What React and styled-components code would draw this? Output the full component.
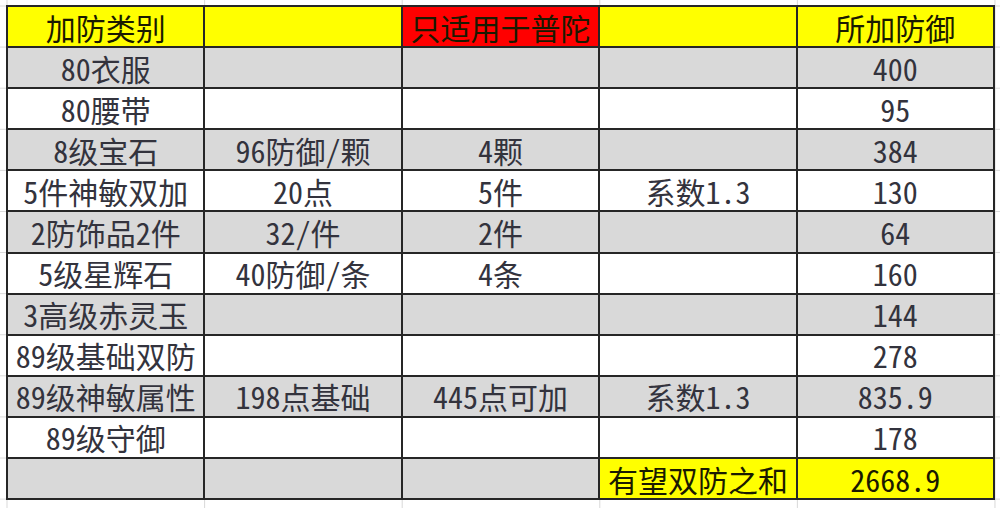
import React from "react";
import styled, { createGlobalStyle } from "styled-components";

const GlobalStyle = createGlobalStyle`
  html, body {
    margin: 0;
    padding: 0;
    background: #fff;
  }
`;

const rows = [
  { tone: "head", cells: ["加防类别", "", "只适用于普陀", "", "所加防御"] },
  { tone: "gray", cells: ["80衣服", "", "", "", "400"] },
  { tone: "white", cells: ["80腰带", "", "", "", "95"] },
  { tone: "gray", cells: ["8级宝石", "96防御/颗", "4颗", "", "384"] },
  { tone: "white", cells: ["5件神敏双加", "20点", "5件", "系数1.3", "130"] },
  { tone: "gray", cells: ["2防饰品2件", "32/件", "2件", "", "64"] },
  { tone: "white", cells: ["5级星辉石", "40防御/条", "4条", "", "160"] },
  { tone: "gray", cells: ["3高级赤灵玉", "", "", "", "144"] },
  { tone: "white", cells: ["89级基础双防", "", "", "", "278"] },
  { tone: "gray", cells: ["89级神敏属性", "198点基础", "445点可加", "系数1.3", "835.9"] },
  { tone: "white", cells: ["89级守御", "", "", "", "178"] },
  { tone: "total", cells: ["", "", "", "有望双防之和", "2668.9"] },
];

const fills = {
  gray: "#d9d9d9",
  white: "#ffffff",
  yellow: "#ffff00",
  red: "#ff0000",
};

const cellFill = (tone, col) => {
  if (tone === "head") return col === 2 ? "red" : "yellow";
  if (tone === "total") return col >= 3 ? "yellow" : "gray";
  return tone;
};

const Page = styled.div`
  width: 1000px;
  height: 508px;
  box-sizing: border-box;
  padding: 5px 5px 0 6px;
  overflow: hidden;
  background-color: #fff;
  background-image: linear-gradient(to right, #d8d8d8 1px, transparent 1px),
    linear-gradient(to bottom, #d8d8d8 1px, transparent 1px);
  background-size: 197.6px 41.1px;
  background-position: 6.5px 5.5px;
`;

const Sheet = styled.div`
  display: grid;
  grid-template-columns: repeat(5, 1fr);
  grid-auto-rows: 39.1px;
  gap: 2px;
  padding: 2px;
  width: 989px;
  box-sizing: border-box;
  background: #262626;
`;

const Cell = styled.div`
  display: flex;
  align-items: center;
  justify-content: center;
  min-width: 0;
  white-space: nowrap;
  background: ${(p) => fills[p.$fill]};
  color: ${(p) => (p.$head ? "#1a1a00" : "#33333d")};
  font-family: "Noto Sans Mono CJK SC", "Noto Sans CJK SC", sans-serif;
  font-size: 30px;
  line-height: 36px;
`;

export default function App() {
  return (
    <>
      <GlobalStyle />
      <Page>
        <Sheet>
          {rows.map((row, r) =>
            row.cells.map((text, c) => {
              const fill = cellFill(row.tone, c);
              return (
                <Cell
                  key={`${r}-${c}`}
                  $fill={fill}
                  $head={fill === "yellow" || fill === "red"}
                >
                  {text}
                </Cell>
              );
            })
          )}
        </Sheet>
      </Page>
    </>
  );
}
